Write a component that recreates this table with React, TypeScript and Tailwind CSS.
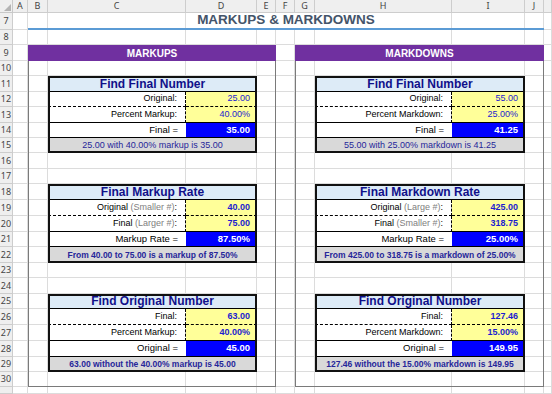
import React from 'react';

type Line = { label: string; note?: string; value: string };
type Calc = {
  title: string;
  lines: [Line, Line];
  result: Line;
  summary: string;
  strong: boolean;
};

// K is only a sliver at the right edge, so its header stays blank
const COLS = ['A', 'B', 'C', 'D', 'E', 'F', 'G', 'H', 'I', 'J', ''];
const ROWS = Array.from({ length: 25 }, (_, i) => i + 7);

// grid row lines, index = grid row
const ROW = [
  '',
  'row-start-1', 'row-start-2', 'row-start-3', 'row-start-4', 'row-start-5',
  'row-start-6', 'row-start-7', 'row-start-8', 'row-start-9', 'row-start-10',
  'row-start-11', 'row-start-12', 'row-start-13', 'row-start-14', 'row-start-15',
  'row-start-16', 'row-start-17', 'row-start-18', 'row-start-19', 'row-start-20',
  'row-start-21', 'row-start-22', 'row-start-23', 'row-start-24', 'row-start-25',
  'row-start-26',
];

const SHEET =
  'grid grid-cols-[13px_15px_20px_138px_71px_19px_19px_20px_137px_73px_19px_1fr] grid-rows-[13px_17px_15px_16px_15px_16px_15px_16px_15px_15px_16px_15px_16px_16px_16px_15px_16px_15px_16px_15px_16px_16px_16px_15px_15px_1fr]';

const markups: Calc[] = [
  {
    title: 'Find Final Number',
    lines: [
      { label: 'Original:', value: '25.00' },
      { label: 'Percent Markup:', value: '40.00%' },
    ],
    result: { label: 'Final =', value: '35.00' },
    summary: '25.00 with 40.00% markup is 35.00',
    strong: false,
  },
  {
    title: 'Final Markup Rate',
    lines: [
      { label: 'Original', note: '(Smaller #)', value: '40.00' },
      { label: 'Final', note: '(Larger #)', value: '75.00' },
    ],
    result: { label: 'Markup Rate =', value: '87.50%' },
    summary: 'From 40.00 to 75.00 is a markup of 87.50%',
    strong: true,
  },
  {
    title: 'Find Original Number',
    lines: [
      { label: 'Final:', value: '63.00' },
      { label: 'Percent Markup:', value: '40.00%' },
    ],
    result: { label: 'Original =', value: '45.00' },
    summary: '63.00 without the 40.00% markup is 45.00',
    strong: true,
  },
];

const markdowns: Calc[] = [
  {
    title: 'Find Final Number',
    lines: [
      { label: 'Original:', value: '55.00' },
      { label: 'Percent Markdown:', value: '25.00%' },
    ],
    result: { label: 'Final =', value: '41.25' },
    summary: '55.00 with 25.00% markdown is 41.25',
    strong: false,
  },
  {
    title: 'Final Markdown Rate',
    lines: [
      { label: 'Original', note: '(Large #)', value: '425.00' },
      { label: 'Final', note: '(Smaller #)', value: '318.75' },
    ],
    result: { label: 'Markup Rate =', value: '25.00%' },
    summary: 'From 425.00 to 318.75 is a markdown of 25.00%',
    strong: true,
  },
  {
    title: 'Find Original Number',
    lines: [
      { label: 'Final:', value: '127.46' },
      { label: 'Percent Markdown:', value: '15.00%' },
    ],
    result: { label: 'Original =', value: '149.95' },
    summary: '127.46 without the 15.00% markdown is 149.95',
    strong: true,
  },
];

const Label = ({ line }: { line: Line }) => (
  <>
    {line.label}
    {line.note && (
      <>
        &nbsp;<span className="text-[#808080]">{line.note}</span>:
      </>
    )}
  </>
);

const CalcTable = ({ calc, start, left }: { calc: Calc; start: number; left: boolean }) => {
  const labelCol = left ? 'col-start-4' : 'col-start-9';
  const valueCol = left ? 'col-start-5' : 'col-start-10';
  const full = left ? 'col-start-4 col-span-2' : 'col-start-9 col-span-2';
  const weight = calc.strong ? 'font-bold' : 'font-normal';

  return (
    <>
      {/* header */}
      <div className={`${full} ${ROW[start]} bg-[#ddebf7] border-b border-black flex items-center justify-center text-[12px] font-bold text-[#10108a]`}>
        {calc.title}
      </div>

      {/* inputs */}
      <div className={`${labelCol} ${ROW[start + 1]} bg-white border-r border-b border-dashed border-black flex items-center justify-end pr-2 text-[9px] text-black whitespace-nowrap`}>
        <Label line={calc.lines[0]} />
      </div>
      <div className={`${valueCol} ${ROW[start + 1]} bg-[#ffff99] border-b border-dashed border-black flex items-center justify-end pr-[7px] text-[9px] text-[#1c1cd0] ${weight}`}>
        {calc.lines[0].value}
      </div>
      <div className={`${labelCol} ${ROW[start + 2]} bg-white border-r border-b border-black [border-right-style:dashed] flex items-center justify-end pr-2 text-[9px] text-black whitespace-nowrap`}>
        <Label line={calc.lines[1]} />
      </div>
      <div className={`${valueCol} ${ROW[start + 2]} bg-[#ffff99] border-b border-black flex items-center justify-end pr-[7px] text-[9px] text-[#1c1cd0] ${weight}`}>
        {calc.lines[1].value}
      </div>

      {/* result */}
      <div className={`${labelCol} ${ROW[start + 3]} bg-white border-b border-black flex items-center justify-end pr-2 text-[9.5px] text-black`}>
        {calc.result.label}
      </div>
      <div className={`${valueCol} ${ROW[start + 3]} bg-[#0000ff] border-b border-black flex items-center justify-end pr-[7px] text-[9.5px] font-bold text-white`}>
        {calc.result.value}
      </div>

      {/* summary */}
      <div className={`${full} ${ROW[start + 4]} bg-[#d9d9d9] flex items-center justify-center text-[#26269a] whitespace-nowrap ${calc.strong ? 'text-[8.5px] font-bold' : 'text-[9px]'}`}>
        {calc.summary}
      </div>

      {/* outline */}
      <div className={`${full} ${ROW[start]} row-span-5 border-2 border-[#111]`} />
    </>
  );
};

export default function App() {
  return (
    <div className="relative w-[552px] h-[394px] overflow-hidden bg-white font-['Liberation_Sans',Arial,sans-serif]">
      {/* sheet grid: headers and gridlines */}
      <div className={`h-[394px] ${SHEET}`}>
        <div className="bg-[#efefef] border-r border-b border-[#c8c8c8] flex items-end justify-end p-[1px]">
          <svg width="7" height="7" viewBox="0 0 7 7">
            <polygon points="7,0 7,7 0,7" fill="#b4b4b4" />
          </svg>
        </div>
        {COLS.map((c, i) => (
          <div
            key={i}
            className="bg-[#efefef] border-r border-b border-[#cdcdcd] flex items-center justify-center text-[9px] text-[#444] font-['Noto_Sans',sans-serif]"
          >
            {c}
          </div>
        ))}
        {ROWS.map((r) => (
          <React.Fragment key={r}>
            <div className="bg-[#efefef] border-r border-b border-[#cdcdcd] flex items-center justify-center text-[9px] text-[#444] font-['Noto_Sans',sans-serif]">
              {r < 31 ? r : ''}
            </div>
            {COLS.map((_, i) => (
              <div key={i} className="border-r border-b border-[#dcdcdc]" />
            ))}
          </React.Fragment>
        ))}
      </div>

      {/* cell content laid over the gridlines */}
      <div className={`absolute inset-0 ${SHEET}`}>
        <div className="col-start-3 col-span-9 row-start-2 flex justify-center border-b-2 border-[#5b9bd5]">
          <span className="bg-white px-1 flex items-center text-[13.5px] font-bold text-[#44546a]">
            MARKUPS &amp; MARKDOWNS
          </span>
        </div>

        <div className="col-start-3 col-span-4 row-start-4 row-span-22 border border-[#7a7a7a]" />
        <div className="col-start-8 col-span-4 row-start-4 row-span-22 border border-[#7a7a7a]" />

        <div className="col-start-3 col-span-4 row-start-4 bg-[#7030a0] flex items-center justify-center text-[10px] font-bold text-white">
          MARKUPS
        </div>
        <div className="col-start-8 col-span-4 row-start-4 bg-[#7030a0] flex items-center justify-center text-[10px] font-bold text-white">
          MARKDOWNS
        </div>

        {markups.map((calc, i) => (
          <CalcTable key={`up-${i}`} calc={calc} start={6 + i * 7} left />
        ))}
        {markdowns.map((calc, i) => (
          <CalcTable key={`down-${i}`} calc={calc} start={6 + i * 7} left={false} />
        ))}
      </div>
    </div>
  );
}
